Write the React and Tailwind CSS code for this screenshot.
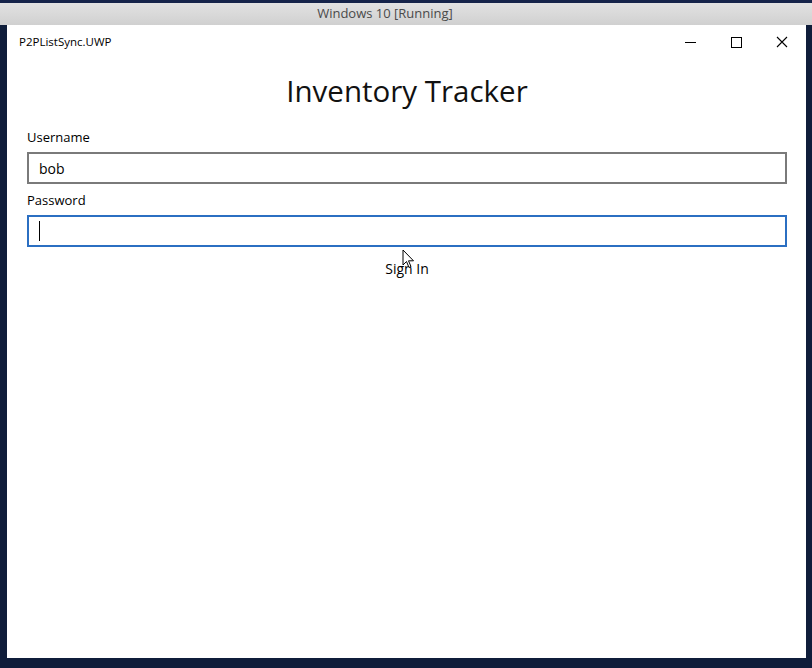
import React from 'react';

// Windows 10 VM frame hosting the UWP sign-in page
export default function App() {
  const ui = { fontFamily: '"Open Sans", "Noto Sans", "Liberation Sans", sans-serif' };

  return (
    <div className="w-[812px] h-[668px] bg-[#0f1d3a] flex flex-col overflow-hidden" style={ui}>
      {/* VM host title */}
      <div className="h-[3px] bg-[#16244a]" />
      <div className="h-[22px] bg-gradient-to-b from-[#e2e2e2] to-[#d0d0d0] flex items-center justify-center pr-[42px] text-[13px] text-[#4a4a4a]">
        Windows 10 [Running]
      </div>

      <div className="flex pl-[7px] pr-[6px] pb-[10px] flex-1">
        <div className="flex-1 bg-white flex flex-col">
          {/* App title bar */}
          <div className="h-[34px] flex items-center pl-[12px] text-[11.5px] text-black">
            <span className="flex-1">P2PListSync.UWP</span>
            <div className="flex items-center">
              <button className="w-[46px] h-[34px] flex items-center justify-center">
                <span className="block w-[11px] h-px bg-black" />
              </button>
              <button className="w-[46px] h-[34px] flex items-center justify-center">
                <span className="block w-[11px] h-[11px] border border-black" />
              </button>
              <button className="w-[46px] h-[34px] flex items-center justify-center mr-[1px]">
                <svg width="12" height="12" viewBox="0 0 12 12">
                  <path d="M1 1 L11 11 M11 1 L1 11" stroke="black" strokeWidth="1.1" />
                </svg>
              </button>
            </div>
          </div>

          {/* Sign-in form */}
          <div className="flex flex-col pl-[20px] pr-[19px] text-black">
            <h1 className="text-center text-[29.5px] leading-[40px] mt-[12px] text-[#111]">Inventory Tracker</h1>
            <label className="text-[13px] leading-[20px] mt-[16px]">Username</label>
            <div className="mt-[5px] h-[32px] border-2 border-[#7a7a7a] flex items-center pl-[10px] text-[14px]">
              bob
            </div>
            <label className="text-[13px] leading-[20px] mt-[6px]">Password</label>
            <div className="mt-[5px] h-[32px] border-2 border-[#2b6fc2] flex items-center pl-[10px]">
              <span className="block w-px h-[20px] bg-black" />
            </div>
            <div className="relative text-center text-[14px] leading-[20px] mt-[12px]">
              Sign In
              {/* mouse pointer */}
              <svg className="absolute left-[375px] top-[-10px]" width="13" height="20" viewBox="0 0 13 20">
                <path d="M1 1 L1 16 L4.5 12.5 L7 18.5 L9 17.5 L6.5 11.8 L11.5 11.8 Z" fill="white" stroke="black" strokeWidth="1" />
              </svg>
            </div>
          </div>
        </div>
      </div>
    </div>
  );
}
